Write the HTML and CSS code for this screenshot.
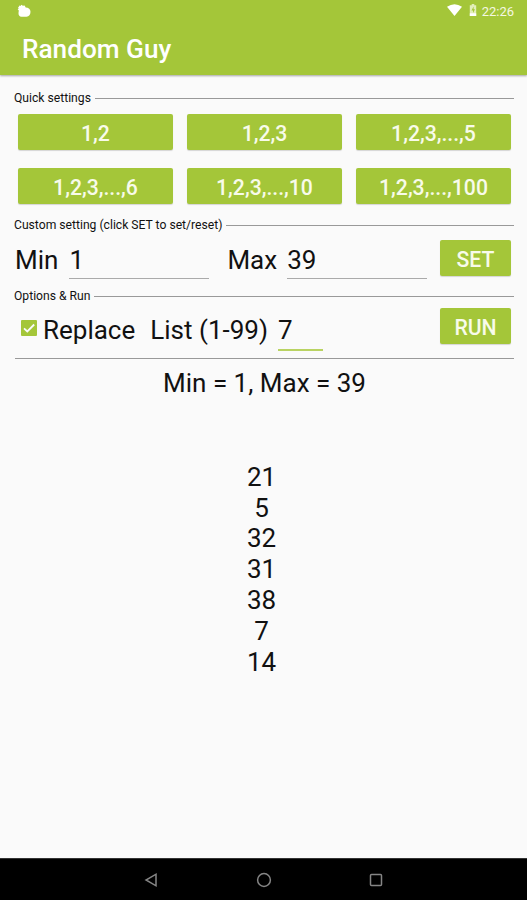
FILE: index.html
```html
<!DOCTYPE html>
<html lang="en">
<head>
    <meta charset="UTF-8">
    <title>Random Guy</title>
    <meta name="viewport" content="width=device-width, initial-scale=1.0">
    <link rel="stylesheet" href="styles.css">
</head>
<body>
    <header>
        <div class="status-bar">
            <svg class="app-icon" width="15" height="14" viewBox="0 0 15 14" fill="#fff">
                <path d="M2 1.5 L3.3 2.1 L4.6 0.8 L5.8 1.7 L7.6 1.4 L8.7 3.5 C11.5 3.5 13.5 5.2 13.5 7.8 C13.5 10.6 12 12.7 9.5 12.7 L4.5 12.7 C2.3 12.7 1.4 11 1.5 9 L1.8 6.5 L0.7 5.2 L1.8 4.2 L0.9 3 L2.1 2.8 Z"/>
            </svg>
            <div class="status-right">
                <svg class="wifi" width="15" height="12" viewBox="0 0 15 12" fill="#fff">
                    <path d="M0 2.8 Q7.5 -2.5 15 2.8 L7.5 12 Z"/>
                </svg>
                <svg class="battery" width="8" height="12" viewBox="0 0 8 12">
                    <path d="M2.7 0h2.6v1.2H7.2V12H0.8V1.2H2.7Z" fill="#e3efba"/>
                    <path d="M0.8 9.3H7.2V12H0.8Z" fill="#fff"/>
                    <path d="M4.6 2.5L2.5 6.5H4V9L6 5.3H4.6Z" fill="#a4c639"/>
                </svg>
                <span>22:26</span>
            </div>
        </div>
        <h1>Random Guy</h1>
    </header>

    <main>
        <div class="section-title">Quick settings</div>
        <div class="quick-buttons">
            <button>1,2</button>
            <button>1,2,3</button>
            <button>1,2,3,...,5</button>
            <button>1,2,3,...,6</button>
            <button>1,2,3,...,10</button>
            <button>1,2,3,...,100</button>
        </div>

        <div class="section-title custom-title">Custom setting (click SET to set/reset)</div>
        <div class="row custom-row">
            <label for="min-input">Min</label>
            <input type="text" id="min-input" value="1">
            <label for="max-input">Max</label>
            <input type="text" id="max-input" value="39">
            <button>SET</button>
        </div>

        <div class="section-title">Options &amp; Run</div>
        <div class="row run-row">
            <svg class="checkbox" width="16" height="16" viewBox="0 0 16 16">
                <rect width="16" height="16" rx="1" fill="#a4c639"/>
                <path d="M3 8.3L6.3 11.4L13.2 4.5" fill="none" stroke="#fafafa" stroke-width="1.8"/>
            </svg>
            <span class="replace-label">Replace</span>
            <label for="list-input">List (1-99)</label>
            <input type="text" id="list-input" value="7">
            <button>RUN</button>
        </div>

        <div class="divider"></div>
        <div class="range">Min = 1, Max = 39</div>
        <div class="results">
            <div>21</div>
            <div>5</div>
            <div>32</div>
            <div>31</div>
            <div>38</div>
            <div>7</div>
            <div>14</div>
        </div>
    </main>

    <nav>
        <svg width="16" height="16" viewBox="0 0 16 16">
            <path d="M13 2.2V13.8L3 8Z"/>
        </svg>
        <svg width="16" height="16" viewBox="0 0 16 16">
            <circle cx="8" cy="8" r="6.4"/>
        </svg>
        <svg width="16" height="16" viewBox="0 0 16 16">
            <rect x="2.5" y="2.5" width="11" height="11" rx="1"/>
        </svg>
    </nav>
</body>
</html>
```
FILE: styles.css
```css
* {
    margin: 0;
    padding: 0;
    box-sizing: border-box;
}

body {
    font-family: Roboto, sans-serif;
    display: flex;
    flex-direction: column;
    height: 900px;
    background-color: #fafafa;
    color: #111;
    font-size: 26px;
    line-height: 30.8px;
    overflow: hidden;
}

header {
    height: 75px;
    background-color: #a4c639;
    color: white;
    box-shadow: 0 1px 2px rgba(0,0,0,0.35);
}

.status-bar {
    display: flex;
    justify-content: space-between;
    height: 22px;
    padding: 4px 13px 0 17px;
}

.status-right {
    display: flex;
    font-size: 13px;
    line-height: 15px;
    color: #f4f8e2;
}

.wifi {
    margin-right: 7px;
}

.battery {
    margin-right: 5px;
}

h1 {
    padding-left: 22px;
    font-size: 26.2px;
    font-weight: 500;
    line-height: 54px;
}

main {
    flex: 1;
    padding: 15px 13px 0 15px;
}

.section-title {
    display: flex;
    align-items: center;
    gap: 4px;
    height: 15px;
    margin-left: -1px;
    padding-top: 1px;
    font-size: 12.15px;
    line-height: 15px;
    white-space: nowrap;
}

.section-title::after {
    content: "";
    flex: 1;
    height: 1px;
    background-color: #999;
}

button {
    height: 36px;
    padding-top: 2px;
    border: none;
    border-radius: 2px;
    background-color: #a4c639;
    box-shadow: 0 1px 1px rgba(0,0,0,0.15);
    color: #f8fbea;
    font-family: inherit;
    font-size: 21.2px;
    font-weight: 500;
}

.quick-buttons {
    display: grid;
    grid-template-columns: repeat(3, 155px);
    gap: 18px 14px;
    padding: 9px 3px 0;
}

.custom-title {
    margin-top: 13px;
}

.row {
    display: flex;
    align-items: flex-start;
}

.row button {
    width: 71px;
    margin-left: auto;
    margin-right: 3px;
}

.row input {
    border: none;
    border-bottom: 1px solid #aaa;
    background: none;
    color: #111;
    font-family: inherit;
    font-size: 26px;
    outline: none;
}

.custom-row {
    height: 56px;
    padding-top: 8px;
}

.custom-row label {
    padding-top: 5px;
}

.custom-row input {
    width: 140px;
    height: 39px;
    padding-top: 2px;
}

#min-input {
    margin: 0 18px 0 11px;
}

#max-input {
    margin-left: 10px;
}

.run-row {
    height: 55px;
    padding-top: 5px;
}

.checkbox {
    margin: 12px 6px 0 6px;
}

.replace-label {
    margin-right: 15px;
}

.run-row span,
.run-row label {
    padding-top: 7px;
}

.row #list-input {
    width: 45px;
    height: 43px;
    padding-top: 3px;
    margin-left: 10px;
    border-bottom: 2px solid #b9d362;
}

.divider {
    height: 1px;
    background-color: #999;
}

.range {
    padding-top: 9px;
    text-align: center;
}

.results {
    padding-top: 63px;
    padding-right: 6px;
    text-align: center;
}

nav {
    display: flex;
    justify-content: center;
    align-items: center;
    gap: 96.5px;
    height: 42px;
    border-top: 1px solid #333;
    background-color: black;
}

nav svg {
    fill: none;
    stroke: #858585;
    stroke-width: 1.5;
}
```
